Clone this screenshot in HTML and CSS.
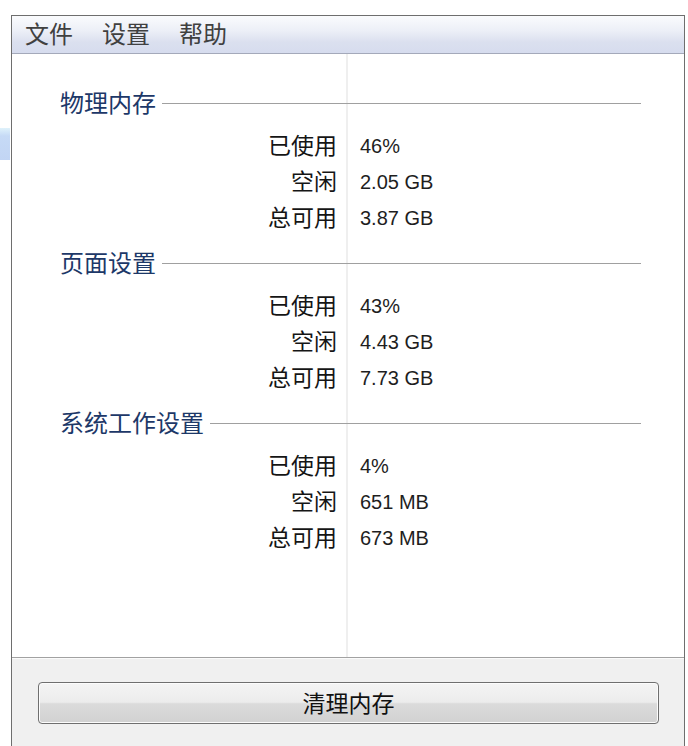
FILE: index.html
```html
<!DOCTYPE html>
<html lang="zh-CN">
<head>
<meta charset="utf-8">
<title>内存</title>
<link rel="stylesheet" href="styles.css">
</head>
<body>
<div class="desktop">
  <div class="strip"><div class="strip-blue"></div></div>
  <div class="window">
    <div class="menubar">
      <span class="menu-item">文件</span>
      <span class="menu-item">设置</span>
      <span class="menu-item">帮助</span>
    </div>
    <div class="content">
      <section class="group">
        <div class="group-head"><span class="group-title">物理内存</span><span class="group-rule"></span></div>
        <div class="rows">
          <span class="label">已使用</span><span class="value">46%</span>
          <span class="label">空闲</span><span class="value">2.05 GB</span>
          <span class="label">总可用</span><span class="value">3.87 GB</span>
        </div>
      </section>
      <section class="group">
        <div class="group-head"><span class="group-title">页面设置</span><span class="group-rule"></span></div>
        <div class="rows">
          <span class="label">已使用</span><span class="value">43%</span>
          <span class="label">空闲</span><span class="value">4.43 GB</span>
          <span class="label">总可用</span><span class="value">7.73 GB</span>
        </div>
      </section>
      <section class="group">
        <div class="group-head"><span class="group-title">系统工作设置</span><span class="group-rule"></span></div>
        <div class="rows">
          <span class="label">已使用</span><span class="value">4%</span>
          <span class="label">空闲</span><span class="value">651 MB</span>
          <span class="label">总可用</span><span class="value">673 MB</span>
        </div>
      </section>
    </div>
    <div class="footer">
      <button class="clean-btn" type="button">清理内存</button>
    </div>
  </div>
</div>
</body>
</html>
```
FILE: styles.css
```css
html, body {
  margin: 0;
  padding: 0;
  background: #ffffff;
  overflow: hidden;
}
body {
  font-family: "Noto Sans CJK SC", "Liberation Sans", sans-serif;
}
.desktop {
  display: flex;
  padding-top: 15px;
  height: 731px;
}
.strip {
  width: 11px;
  flex: none;
}
.strip-blue {
  margin-top: 113px;
  width: 10px;
  height: 32px;
  background: linear-gradient(#dff2fb 0%, #c6daf6 25%, #c2d5f4 100%);
}
.window {
  width: 672px;
  border: 1px solid #6e6e6e;
  border-bottom: none;
  display: flex;
  flex-direction: column;
  background: #ffffff;
}
.menubar {
  height: 37px;
  border-bottom: 1px solid #a4a9ba;
  background: linear-gradient(#fafbfd 0%, #eceff7 40%, #dbe0ef 70%, #d6dcee 100%);
  display: flex;
  align-items: center;
  padding-left: 13px;
  gap: 29px;
}
.menu-item {
  font-size: 24px;
  line-height: 33px;
  padding-bottom: 4px;
  color: #404040;
  width: 48px;
}
.content {
  flex: 1;
  padding: 31px 43px 0 0;
  background: linear-gradient(90deg, transparent 334px, #efefef 334px, #efefef 336px, transparent 336px);
  border-bottom: 1px solid #a2a2a2;
}
.group {
  margin-bottom: 9px;
}
.group-head {
  display: flex;
  align-items: center;
  height: 36px;
  padding-left: 48px;
  margin-bottom: 7px;
}
.group-title {
  font-size: 24px;
  line-height: 33px;
  padding-bottom: 3px;
  color: #1d3868;
}
.group-rule {
  flex: 1;
  height: 1px;
  margin-left: 6px;
  background: #a0a0a0;
}
.rows {
  display: grid;
  grid-template-columns: 325px 1fr;
  grid-auto-rows: 36px;
  align-items: center;
}
.label {
  text-align: right;
  font-size: 23px;
  line-height: 32px;
  padding-bottom: 4px;
  color: #151515;
}
.value {
  padding-left: 23px;
  font-family: "Liberation Sans", "DejaVu Sans", sans-serif;
  font-size: 20px;
  line-height: 36px;
  color: #1e1e1e;
}
.footer {
  height: 88px;
  background: #f0f0f0;
  border-top: 1px solid #fbfbfb;
  padding-top: 23px;
  box-sizing: border-box;
}
.clean-btn {
  display: block;
  margin-left: 26px;
  width: 621px;
  height: 42px;
  border: 1px solid #6f6f6f;
  border-radius: 4px;
  box-shadow: inset 0 0 0 1px #fcfcfc;
  background: linear-gradient(#f4f4f4 0%, #ececec 48%, #dbdbdb 52%, #d1d1d1 100%);
  font-family: "Noto Sans CJK SC", sans-serif;
  font-size: 23px;
  line-height: 36px;
  padding: 0 0 2px 0;
  color: #111111;
}
```
